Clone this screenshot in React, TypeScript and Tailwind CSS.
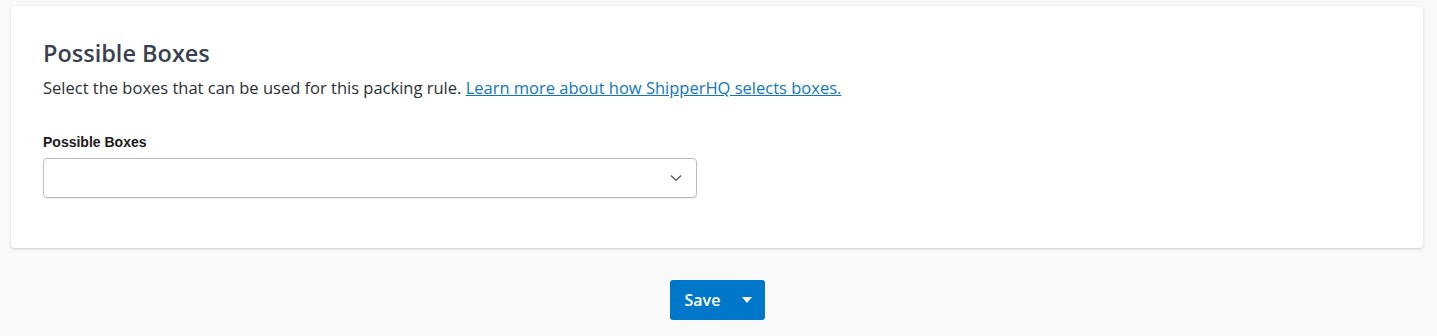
import React from "react";

export default function App() {
  return (
    <div className="min-h-[336px] w-full bg-[#f9f9f9] pt-[6px] pl-[11px] pr-[14px] pb-4" style={{ fontFamily: "'Open Sans', Lato, sans-serif" }}>
      <div className="rounded-[4px] bg-white shadow-[0_1px_3px_rgba(0,0,0,0.18)] px-8 pt-[32px] pb-[50px]">
        <h2 className="text-[23.5px] leading-[30px] font-semibold text-[#3b4150]">Possible Boxes</h2>
        <p className="mt-[8px] text-[16.5px] leading-[24px] text-[#2b2f36]">
          Select the boxes that can be used for this packing rule.{" "}
          <a href="#" className="text-[#0f77c5] underline">Learn more about how ShipperHQ selects boxes.</a>
        </p>
        <div className="mt-[33px] text-[14px] leading-[18px] font-bold text-[#1a1a1a]" style={{ fontFamily: "'Liberation Sans', Arial, sans-serif" }}>
          Possible Boxes
        </div>
        <div className="mt-[7px] flex h-[40px] w-[654px] items-center justify-end rounded-[4px] border border-[#bdbdbd] bg-white pr-[14px] shadow-[0_1px_1px_rgba(0,0,0,0.06)]">
          <svg width="12" height="8" viewBox="0 0 12 8" fill="none">
            <path d="M1 1.5l5 5 5-5" stroke="#555" strokeWidth="1.2" />
          </svg>
        </div>
      </div>
      <div className="mt-[32px] flex justify-center">
        <div className="flex h-[40px] w-[95px] items-center rounded-[3px] bg-[#0077c8] text-white">
          <span className="pl-[15px] pr-[10px] text-[16px] font-semibold">Save</span>
          <span className="flex h-full items-center pl-[12px] pr-[9px]">
            <svg width="10" height="6" viewBox="0 0 10 6"><path d="M0 0h10L5 6z" fill="white" /></svg>
          </span>
        </div>
      </div>
    </div>
  );
}
